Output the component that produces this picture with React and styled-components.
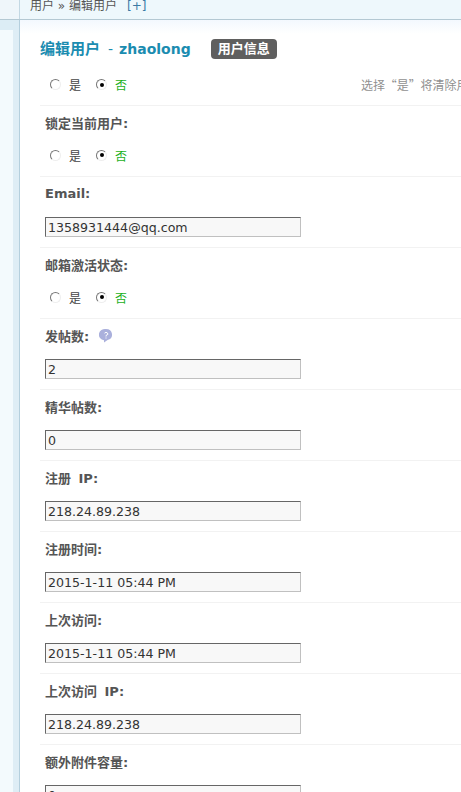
import styled, { createGlobalStyle } from 'styled-components';

const GlobalStyle = createGlobalStyle`
  html,
  body {
    margin: 0;
    height: 100%;
    overflow: hidden;
    background: #fff;
  }
`;

const Page = styled.div`
  height: 792px;
  overflow: hidden;
  font-family: 'DejaVu Sans', 'Noto Sans CJK SC', sans-serif;
  font-size: 12px;
  color: #444;
`;

const Crumbs = styled.div`
  display: flex;
  align-items: flex-end;
  gap: 4px;
  height: 12px;
  padding: 0 0 7px 30px;
  background: linear-gradient(to right, #eff6fa 0, #eff6fa 19px, #c3d8e3 19px, #c3d8e3 20px, #eef8fc 20px);
  border-bottom: 1px solid #b4c9d3;
  font-size: 12px;
  line-height: 12px;
  color: #555;
  overflow: hidden;
`;

const AddLink = styled.span`
  margin-left: 6px;
  color: #3a7aa5;
`;

const Body = styled.div`
  display: flex;
`;

const Sidebar = styled.div`
  width: 19px;
  flex: none;
  border-right: 1px solid #b4cfdd;
  background:
    linear-gradient(to bottom, #dcedf5 0, #dcedf5 10px, transparent 10px),
    linear-gradient(to right, #f3fafd 0, #f3fafd 13px, #deedf5 13px);
`;

const Content = styled.div`
  flex: 1;
  min-width: 0;
  padding-left: 20px;
  background: linear-gradient(to bottom, #f3f8fe 0, #fff 14px);
`;

const TitleRow = styled.div`
  display: flex;
  align-items: center;
  height: 34px;
  padding-top: 10px;
  margin-bottom: 4px;
`;

const Title = styled.h1`
  margin: 0;
  font-size: 14px;
  font-weight: 700;
  color: #1b8cb0;
  white-space: nowrap;
`;

const TitleName = styled.span`
  font-size: 15px;
  margin-right: 8px;
`;

const Dash = styled.span`
  margin-right: 6px;
  font-weight: 400;
`;

const Badge = styled.span`
  margin: 3px 0 0 20px;
  padding: 0 7px;
  height: 20px;
  line-height: 20px;
  border-radius: 4px;
  background: #5f5f5f;
  color: #fff;
  font-size: 13px;
  font-weight: 700;
`;

const Row = styled.div`
  height: 70px;
  border-bottom: 1px solid #f2f2f2;
`;

const FirstRow = styled(Row)`
  display: flex;
  align-items: center;
  height: 33px;
  padding-bottom: 4px;
  overflow: hidden;
`;

const Label = styled.div`
  display: flex;
  align-items: center;
  height: 33px;
  padding-left: 5px;
  font-size: 13px;
  font-weight: 700;
  word-spacing: 3px;
  color: #555;
`;

const RadioGroup = styled.div`
  display: flex;
  align-items: center;
  flex: none;
  height: 32px;
  padding-left: 10px;
`;

const Radio = styled.input.attrs({ type: 'radio' })`
  appearance: none;
  position: relative;
  width: 11px;
  height: 11px;
  margin: 0 8px 0 0;
  border-radius: 50%;
  border: 1px solid;
  border-color: #777 #eee #eee #777;
  background: #fff;

  &:checked::after {
    content: '';
    position: absolute;
    left: 2.500px;
    top: 2.500px;
    width: 4px;
    height: 4px;
    border-radius: 50%;
    background: #000;
  }
`;

const Choice = styled.label`
  display: flex;
  align-items: center;
  width: 46px;
  color: ${(p) => (p.$on ? '#1bb01a' : '#444')};
`;

const Hint = styled.span`
  margin-left: 219px;
  font-family: 'Noto Sans CJK SC', sans-serif;
  word-spacing: -3px;
  white-space: nowrap;
  color: #909090;
`;

const TextInput = styled.input`
  display: block;
  box-sizing: border-box;
  width: 256px;
  height: 20px;
  margin: 7px 0 0 5px;
  padding: 0 1px 0 2px;
  border: 1px solid;
  border-color: #666 #c0c0c0 #c0c0c0 #666;
  background: #f8f8f8;
  font-family: 'DejaVu Sans', sans-serif;
  font-size: 12.600px;
  color: #333;
`;

const HelpIcon = styled.svg`
  width: 14px;
  height: 15px;
  margin-left: 10px;
`;

const YesNo = () => (
  <RadioGroup>
    <Choice>
      <Radio />是
    </Choice>
    <Choice $on>
      <Radio defaultChecked />否
    </Choice>
  </RadioGroup>
);

const Field = ({ label, value, help }) => (
  <Row>
    <Label>
      {label}
      {help && (
        <HelpIcon viewBox='0 0 14 15'>
          <path d='M7 1a6 5.600 0 0 1 1.600 11L5 14.500V12.300A6 5.600 0 0 1 7 1z' fill='#aab0dc' />
          <path d='M5.500 5.200Q7 3.500 8.500 5T7 7.500V8.500M7 9.500v1' stroke='#fff' strokeWidth='1' fill='none' />
        </HelpIcon>
      )}
    </Label>
    {value !== undefined ? <TextInput defaultValue={value} /> : <YesNo />}
  </Row>
);

const App = () => (
  <Page lang='zh-CN'>
    <GlobalStyle />
    <Crumbs>
      用户 » 编辑用户 <AddLink>[+]</AddLink>
    </Crumbs>
    <Body>
      <Sidebar />
      <Content>
        <TitleRow>
          <Title>
            <TitleName>编辑用户</TitleName>
            <Dash>-</Dash>zhaolong
          </Title>
          <Badge>用户信息</Badge>
        </TitleRow>
        <FirstRow>
          <YesNo />
          <Hint>选择 “是” 将清除用</Hint>
        </FirstRow>
        <Field label='锁定当前用户:' />
        <Field label='Email:' value='1358931444@qq.com' />
        <Field label='邮箱激活状态:' />
        <Field label='发帖数:' value='2' help />
        <Field label='精华帖数:' value='0' />
        <Field label='注册 IP:' value='218.24.89.238' />
        <Field label='注册时间:' value='2015-1-11 05:44 PM' />
        <Field label='上次访问:' value='2015-1-11 05:44 PM' />
        <Field label='上次访问 IP:' value='218.24.89.238' />
        <Field label='额外附件容量:' value='0' />
      </Content>
    </Body>
  </Page>
);

export default App;
